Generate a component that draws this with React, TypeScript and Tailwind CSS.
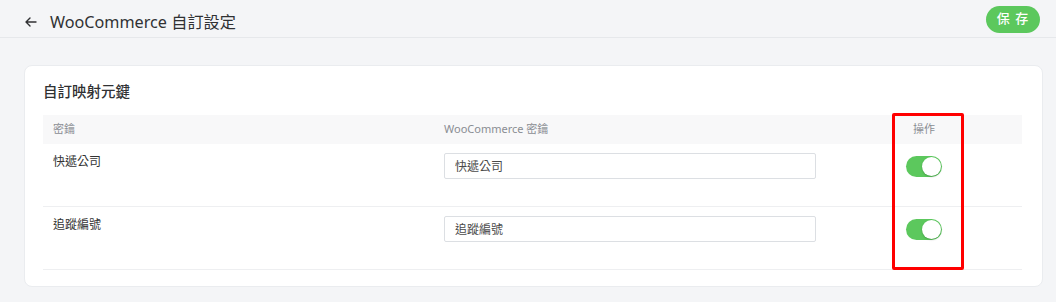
import { useState } from "react";

const rows = [
  { key: "快遞公司", value: "快遞公司" },
  { key: "追蹤編號", value: "追蹤編號" },
];

const Toggle = ({ on, onChange }: { on: boolean; onChange: () => void }) => (
  <button
    type="button"
    onClick={onChange}
    className={`relative w-[36px] h-[21px] rounded-full transition-colors ${
      on ? "bg-[#5cc85d]" : "bg-[#d9d9d9]"
    }`}
  >
    <span
      className={`absolute top-[1px] w-[19px] h-[19px] rounded-full bg-white shadow-[0_1px_2px_rgba(0,0,0,0.2)] transition-all ${
        on ? "left-[16px]" : "left-[1px]"
      }`}
    />
  </button>
);

const App = () => {
  const [values, setValues] = useState(rows.map((r) => r.value));
  const [enabled, setEnabled] = useState(rows.map(() => true));

  return (
    <div
      className="min-h-screen bg-[#f4f5f7] text-[#303133]"
      style={{ fontFamily: '"Noto Sans", "Noto Sans CJK TC", sans-serif' }}
    >
      <header className="h-[38px] flex items-center justify-between pl-[25px] pr-[16px] border-b border-[#e6e8eb]">
        <div className="flex items-center gap-[13px] pt-[6px]">
          <svg width="12" height="10" viewBox="0 0 12 10" fill="none">
            <path
              d="M11 5H1.5M5 1L1 5l4 4"
              stroke="#303133"
              strokeWidth="1.4"
              strokeLinecap="round"
              strokeLinejoin="round"
            />
          </svg>
          <h1 className="text-[16.2px] leading-[22px]">WooCommerce 自訂設定</h1>
        </div>
        <button
          type="button"
          className="w-[54px] h-[27px] rounded-full bg-[#5cc85d] text-white text-[13px] font-medium tracking-[0.08em] mt-[1px]"
        >
          保 存
        </button>
      </header>

      <div className="pl-[24px] pr-[13px] pt-[27px] pb-[14px]">
        <div className="bg-white rounded-[8px] border border-[#eaecef] pl-[18px] pr-[20px] pt-[15px] pb-[16px]">
          <h2 className="text-[14.5px] leading-[20px] font-medium mb-[14px]">
            自訂映射元鍵
          </h2>

          <div className="relative">
            <div className="grid grid-cols-[391px_392px_1fr] h-[29px] items-center bg-[#f8f8f9] text-[11px] text-[#8a8d93]">
              <div className="pl-[10px]">密鑰</div>
              <div className="pl-[10px]">WooCommerce 密鑰</div>
              <div className="text-center">操作</div>
            </div>

            {rows.map((row, i) => (
              <div
                key={row.key}
                className="grid grid-cols-[391px_392px_1fr] h-[63px] pt-[9px] border-b border-[#eeeff1]"
              >
                <div className="pl-[10px] text-[12px] leading-[18px] text-[#333]">
                  {row.key}
                </div>
                <div className="pl-[10px]">
                  <input
                    type="text"
                    value={values[i]}
                    onChange={(e) =>
                      setValues((prev) =>
                        prev.map((v, j) => (j === i ? e.target.value : v))
                      )
                    }
                    className="w-[372px] h-[26px] px-[10px] border border-[#dcdfe3] rounded-[2px] text-[12px] text-[#4a4a4a] focus:outline-none"
                  />
                </div>
                <div className="flex justify-center pt-[3px]">
                  <Toggle
                    on={enabled[i]}
                    onChange={() =>
                      setEnabled((prev) =>
                        prev.map((v, j) => (j === i ? !v : v))
                      )
                    }
                  />
                </div>
              </div>
            ))}

            <div className="absolute left-[849px] top-[-2px] w-[72px] h-[157px] border-[3px] border-[#ff0000] rounded-[2px] pointer-events-none" />
          </div>
        </div>
      </div>
    </div>
  );
};

export default App;
